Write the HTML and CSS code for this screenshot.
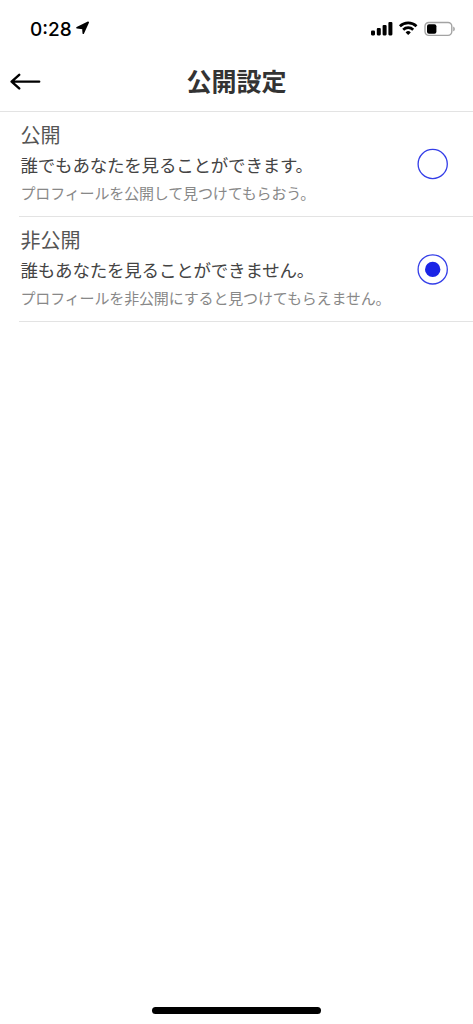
FILE: index.html
```html
<!DOCTYPE html>
<html lang="ja">
<head>
<meta charset="utf-8">
<title>公開設定</title>
<link rel="stylesheet" href="styles.css">
</head>
<body>
<div class="screen">
  <div class="status">
    <span class="time">0:28</span>
    <svg class="location" width="14" height="14" viewBox="0 0 14 14"><path d="M12.2 1.3 7.3 12.2 6.9 7.4 1 6.8Z" stroke="#000" stroke-width="1.6" stroke-linejoin="round"/></svg>
    <svg class="indicators" width="86" height="16" viewBox="0 0 86 16">
      <rect x="1" y="9.6" width="4" height="4.8" rx="1.1"/>
      <rect x="6.8" y="7" width="4" height="7.4" rx="1.1"/>
      <rect x="12.6" y="4" width="4" height="10.4" rx="1.1"/>
      <rect x="18.4" y="1" width="4" height="13.4" rx="1.1"/>
      <g fill="none" stroke="#000" stroke-width="2.7">
        <path d="M29.9 5.3a12 12 0 0 1 16.6 0"/>
        <path d="M33.2 8.7a7.2 7.2 0 0 1 10 0"/>
      </g>
      <path d="M35.6 11.4a3.7 3.7 0 0 1 5.2 0L38.2 14Z"/>
      <rect x="55" y="1.5" width="26.8" height="12.9" rx="3.8" fill="none" stroke="#a3a3a3" stroke-width="1.4"/>
      <rect x="57" y="3.3" width="9.4" height="9.4" rx="2"/>
      <path d="M83.2 5.4c2.2.7 2.2 4.2 0 4.9Z" fill="#a3a3a3"/>
    </svg>
  </div>
  <header class="header">
    <svg class="back" width="32" height="18" viewBox="0 0 32 18" fill="none" stroke="#000" stroke-width="2.4" stroke-linecap="round" stroke-linejoin="round"><path d="M29.2 8.6H1.6M9.2 1.8 1.6 8.6l7.6 6.8"/></svg>
    <h1 class="title">公開設定</h1>
  </header>
  <main class="options">
    <div class="option">
      <div class="copy">
        <div class="name">公開</div>
        <div class="desc">誰でもあなたを見ることができます。</div>
        <div class="note">プロフィールを公開して見つけてもらおう。</div>
      </div>
      <svg class="radio" width="32" height="32" viewBox="0 0 32 32"><circle class="ring" cx="15.7" cy="16" r="14.6"/></svg>
    </div>
    <div class="option">
      <div class="copy">
        <div class="name">非公開</div>
        <div class="desc">誰もあなたを見ることができません。</div>
        <div class="note">プロフィールを非公開にすると見つけてもらえません。</div>
      </div>
      <svg class="radio" width="32" height="32" viewBox="0 0 32 32"><circle class="ring" cx="15.7" cy="16.4" r="14.6"/><circle class="dot" cx="15.7" cy="16.4" r="7.7"/></svg>
    </div>
  </main>
  <div class="home"></div>
</div>
</body>
</html>
```
FILE: styles.css
```css
* { box-sizing: border-box; }
body { margin: 0; background: #fff; }
.screen {
  display: flex;
  flex-direction: column;
  width: 473px;
  height: 1024px;
  background: #fff;
  font-family: "Noto Sans CJK JP", sans-serif;
  overflow: hidden;
}
.status {
  display: flex;
  align-items: center;
  height: 52px;
  padding: 6px 17px 0 30px;
}
.time {
  padding-top: 2px;
  font: 500 19px/24px Inter, sans-serif;
  width: 46px;
  white-space: nowrap;
}
.location { margin-top: -2px; }
.indicators { margin-left: auto; }
.header {
  display: grid;
  grid-template-columns: 1fr auto 1fr;
  align-items: center;
  height: 60px;
  padding: 0 10px;
  border-bottom: 1px solid #e3e3e3;
}
.title {
  margin: 0;
  padding-bottom: 3px;
  font-size: 25px;
  line-height: 36px;
  font-weight: 700;
  color: #333;
}
.options { flex: 1; }
.option {
  display: flex;
  align-items: center;
  justify-content: space-between;
  height: 105px;
  margin-left: 19px;
  padding: 0 24px 0 1.5px;
  border-bottom: 1px solid #e3e3e3;
}
.copy { padding-bottom: 4px; white-space: nowrap; font-weight: 400; }
.name { font-size: 20px; line-height: 31px; color: #555; }
.desc { font-size: 17.5px; line-height: 30px; color: #444; letter-spacing: -0.2px; }
.note { font-size: 15px; line-height: 26px; color: #888; letter-spacing: -0.15px; }
.ring { fill: none; stroke: #343ee8; stroke-width: 1.3; }
.dot { fill: #1b25e6; }
.home {
  width: 169px;
  height: 7px;
  margin: 0 auto 10px;
  border-radius: 4px;
  background: #000;
}
```
